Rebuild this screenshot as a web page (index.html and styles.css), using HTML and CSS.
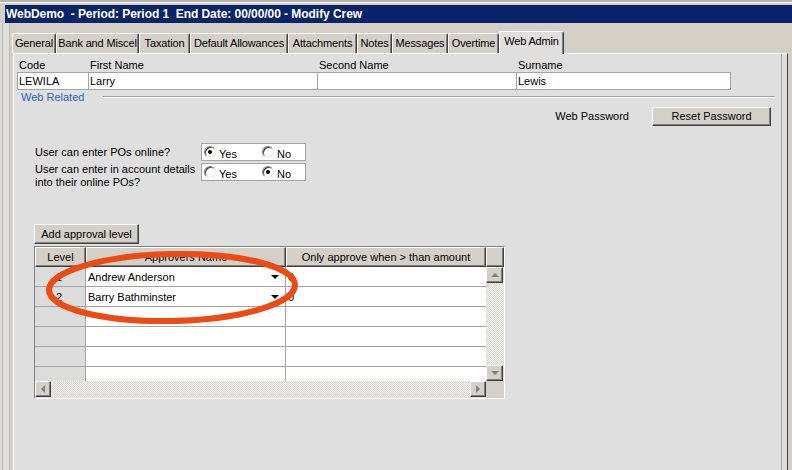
FILE: index.html
```html
<!DOCTYPE html>
<html>
<head>
<meta charset="utf-8">
<link rel="stylesheet" href="styles.css">
</head>
<body>
<div class="screen">
  <div class="topedge"></div>
  <div class="titlebar">WebDemo  - Period: Period 1  End Date: 00/00/00 - Modify Crew</div>
  <div class="client">
    <div class="tabs">
      <div class="tab t1">General</div>
      <div class="tab t2">Bank and Miscel</div>
      <div class="tab t3">Taxation</div>
      <div class="tab t4">Default Allowances</div>
      <div class="tab t5">Attachments</div>
      <div class="tab t6">Notes</div>
      <div class="tab t7">Messages</div>
      <div class="tab t8">Overtime</div>
      <div class="tab t9 active">Web Admin</div>
    </div>
    <div class="panel">
      <div class="content">
        <div class="crew">
          <div class="col c-code"><div class="lbl">Code</div><div class="field">LEWILA</div></div>
          <div class="col c-first"><div class="lbl">First Name</div><div class="field">Larry</div></div>
          <div class="col c-second"><div class="lbl">Second Name</div><div class="field"></div></div>
          <div class="col c-sur"><div class="lbl">Surname</div><div class="field">Lewis</div></div>
        </div>
        <div class="section"><span class="sec-title">Web Related</span><span class="sec-line"></span></div>
        <div class="pw-row"><span class="pw-label">Web Password</span><div class="btn pw-btn">Reset Password</div></div>
        <div class="opt opt1">
          <div class="opt-label">User can enter POs online?</div>
          <div class="rg">
            <div class="ropt yes"><span class="radio checked"></span><span class="rtext">Yes</span></div>
            <div class="ropt"><span class="radio"></span><span class="rtext">No</span></div>
          </div>
        </div>
        <div class="opt opt2">
          <div class="opt-label">User can enter in account details<br>into their online POs?</div>
          <div class="rg">
            <div class="ropt yes"><span class="radio"></span><span class="rtext">Yes</span></div>
            <div class="ropt"><span class="radio checked"></span><span class="rtext">No</span></div>
          </div>
        </div>
        <div class="btn add-btn">Add approval level</div>
        <div class="dgrid">
          <div class="dg-head">
            <div class="hc w-level">Level</div>
            <div class="hc w-name">Approvers Name</div>
            <div class="hc w-amt">Only approve when &gt; than amount</div>
            <div class="hc w-corner"></div>
          </div>
          <div class="dg-body">
            <div class="rows">
              <div class="row"><div class="cell lvl w-level">1</div><div class="cell name w-name"><span>Andrew Anderson</span><span class="dd"></span></div><div class="cell amt w-amt">0</div></div>
              <div class="row"><div class="cell lvl w-level">2</div><div class="cell name w-name"><span>Barry Bathminster</span><span class="dd"></span></div><div class="cell amt w-amt">0</div></div>
              <div class="row"><div class="cell lvl w-level"></div><div class="cell name w-name"></div><div class="cell amt w-amt"></div></div>
              <div class="row"><div class="cell lvl w-level"></div><div class="cell name w-name"></div><div class="cell amt w-amt"></div></div>
              <div class="row"><div class="cell lvl w-level"></div><div class="cell name w-name"></div><div class="cell amt w-amt"></div></div>
              <div class="row"><div class="cell lvl w-level"></div><div class="cell name w-name"></div><div class="cell amt w-amt"></div></div>
            </div>
            <div class="vscroll">
              <div class="sbtn"><span class="arr up"></span></div>
              <div class="track"></div>
              <div class="sbtn"><span class="arr down"></span></div>
            </div>
          </div>
          <div class="hscroll">
            <div class="sbtn h"><span class="arr left"></span></div>
            <div class="track"></div>
            <div class="sbtn h"><span class="arr right"></span></div>
            <div class="corner"></div>
          </div>
        </div>
      </div>
    </div>
  </div>
  <svg class="highlight" width="270" height="90" viewBox="0 0 270 90">
    <ellipse cx="132" cy="41.5" rx="123" ry="33.5" transform="rotate(-1.2 132 41.5)" fill="none" stroke="#ee4a14" stroke-width="6"/>
  </svg>
</div>
</body>
</html>
```

FILE: styles.css
```css
* { box-sizing: border-box; }
html, body { margin: 0; padding: 0; }
body {
  width: 792px;
  height: 470px;
  overflow: hidden;
  background: #d4d0c8;
  font-family: "Liberation Sans", Arial, sans-serif;
  font-size: 11px;
  color: #000;
}
.screen {
  position: relative;
  width: 792px;
  height: 470px;
  display: flex;
  flex-direction: column;
}
.topedge {
  height: 5px;
  flex: none;
  background: linear-gradient(#b9b5ad 0 2px, #ffffff 2px 3px, #d4d0c8 3px);
}
.titlebar {
  flex: none;
  height: 18px;
  margin-left: 5px;
  background: #0a246a;
  color: #fff;
  font-weight: bold;
  font-size: 12px;
  line-height: 18px;
  padding-left: 1px;
  white-space: pre;
  letter-spacing: -0.05px;
}
.client {
  flex: 1;
  display: flex;
  flex-direction: column;
  min-height: 0;
  background: linear-gradient(to right, #dedcd8 0 2px, #b8b4ac 2px 3px, #e2e0dc 3px 9px, #bcb8b0 9px 10px, #d4d0c8 10px);
}
.tabs {
  flex: none;
  height: 30px;
  display: flex;
  align-items: flex-end;
  position: relative;
  z-index: 2;
  background: #d4d0c8;
  margin-left: 11px;
  padding-left: 1px;
}
.tab {
  height: 20px;
  line-height: 18px;
  text-align: center;
  white-space: nowrap;
  letter-spacing: -0.15px;
  background: #d4d0c8;
  border-top: 1px solid #fff;
  border-left: 1px solid #fff;
  border-right: 1px solid #404040;
  box-shadow: inset -1px 0 #808080;
  border-radius: 2px 2px 0 0;
}
.t1 { width: 44px; }
.t2 { width: 83px; }
.t3 { width: 51px; }
.t4 { width: 98px; }
.t5 { width: 69px; }
.t6 { width: 35px; }
.t7 { width: 56px; }
.t8 { width: 51px; }
.t9 { width: 65px; }
.tab.active {
  height: 23px;
  margin-bottom: -1px;
  line-height: 19px;
  background: #e0dfde;
  position: relative;
  z-index: 3;
}
.panel {
  flex: 1;
  margin-left: 13px;
  width: 775px;
  background: #dfdfdf;
  border-top: 1px solid #fff;
  border-left: 1px solid #fff;
  border-right: 1px solid #404040;
  position: relative;
  z-index: 1;
}
.content {
  height: 100%;
  margin-right: 5px;
  border-right: 1px solid #a8a8a8;
  padding: 5px 0 0 3px;
}
.crew { display: flex; }
.col { display: flex; flex-direction: column; }
.col + .col { margin-left: -1px; }
.lbl { height: 13px; line-height: 13px; padding-left: 2px; }
.field {
  height: 18px;
  line-height: 16px;
  border: 1px solid #a4a4a4;
  background: #fff;
  padding-left: 1px;
}
.c-code { width: 72px; }
.c-first { width: 230px; }
.c-second { width: 200px; }
.c-sur { width: 215px; }
.section {
  display: flex;
  align-items: center;
  height: 14px;
  padding-left: 4px;
  margin-right: 6px;
}
.sec-title { color: #2a62c6; }
.sec-line {
  flex: 1;
  height: 2px;
  margin-left: 19px;
  border-top: 1px solid #a8a8a8;
  border-bottom: 1px solid #fff;
}
.pw-row {
  display: flex;
  justify-content: flex-end;
  align-items: center;
  height: 19px;
  margin-top: 3px;
  padding-right: 10px;
}
.pw-label { margin-right: 23px; padding-bottom: 1px; }
.btn {
  background: #d4d0c8;
  border: 1px solid;
  border-color: #fff #404040 #404040 #fff;
  box-shadow: inset -1px -1px #808080;
  text-align: center;
  white-space: nowrap;
}
.pw-btn { width: 119px; height: 19px; line-height: 17px; }
.opt { display: flex; padding-left: 18px; }
.opt1 { align-items: center; margin-top: 17px; margin-bottom: 2px; }
.opt2 { align-items: flex-start; }
.opt-label { width: 166px; line-height: 13px; }
.rg {
  display: flex;
  align-items: center;
  width: 105px;
  height: 18px;
  border: 1px solid #a4a4a4;
  background: #fff;
  padding-left: 2px;
}
.ropt { display: flex; align-items: center; }
.ropt.yes { width: 58px; }
.radio {
  width: 12px;
  height: 12px;
  border-radius: 50%;
  border: 1px solid;
  border-color: #808080 #e8e8e8 #e8e8e8 #808080;
  box-shadow: inset 1px 1px 0 #404040;
  background: #fff;
  position: relative;
  flex: none;
}
.radio.checked::after {
  content: "";
  position: absolute;
  left: 3px;
  top: 3px;
  width: 4px;
  height: 4px;
  border-radius: 50%;
  background: #000;
}
.rtext { margin-left: 3px; padding-top: 4px; line-height: 13px; }
.add-btn {
  width: 105px;
  height: 20px;
  line-height: 18px;
  margin-left: 17px;
  margin-top: 35px;
}
.dgrid {
  width: 471px;
  margin-left: 17px;
  margin-top: 2px;
  border: 1px solid;
  border-color: #808080 #fff #fff #808080;
  display: flex;
  flex-direction: column;
}
.dg-head { display: flex; height: 20px; }
.hc {
  height: 20px;
  line-height: 18px;
  text-align: center;
  white-space: nowrap;
  overflow: hidden;
  background: #d4d0c8;
  border: 1px solid;
  border-color: #fff #404040 #404040 #fff;
  box-shadow: inset -1px -1px #808080;
}
.w-level { width: 51px; flex: none; }
.w-name { width: 200px; flex: none; }
.w-amt { width: 200px; flex: none; }
.w-corner { width: 18px; flex: none; }
.dg-body { display: flex; height: 114px; }
.rows { width: 451px; overflow: hidden; background: #fff; }
.row { display: flex; height: 20px; }
.cell {
  height: 20px;
  line-height: 20px;
  border-right: 1px solid #a4a4a4;
  border-bottom: 1px solid #a4a4a4;
  padding-left: 2px;
}
.cell.lvl { background: #dcdcdc; padding-left: 21px; }
.cell.name { display: flex; justify-content: space-between; align-items: center; padding-right: 6px; }
.cell.amt { border-right: none; }
.dd {
  width: 0;
  height: 0;
  border-left: 4px solid transparent;
  border-right: 4px solid transparent;
  border-top: 4px solid #000;
}
.vscroll { width: 18px; display: flex; flex-direction: column; }
.track {
  flex: 1;
  background: repeating-conic-gradient(#ffffff 0 25%, #d4d0c8 0 50%) 0 0 / 2px 2px;
}
.sbtn {
  width: 17px;
  height: 16px;
  flex: none;
  background: #d4d0c8;
  border: 1px solid;
  border-color: #fff #404040 #404040 #fff;
  box-shadow: inset -1px -1px #808080;
  display: flex;
  align-items: center;
  justify-content: center;
}
.sbtn.h { width: 16px; height: 16px; }
.arr { width: 0; height: 0; }
.arr.up { border-left: 4px solid transparent; border-right: 4px solid transparent; border-bottom: 4px solid #808080; }
.arr.down { border-left: 4px solid transparent; border-right: 4px solid transparent; border-top: 4px solid #808080; }
.arr.left { border-top: 4px solid transparent; border-bottom: 4px solid transparent; border-right: 4px solid #808080; }
.arr.right { border-top: 4px solid transparent; border-bottom: 4px solid transparent; border-left: 4px solid #808080; }
.hscroll { display: flex; height: 17px; }
.hscroll .track { height: 16px; }
.corner { width: 18px; background: #d4d0c8; }
.highlight {
  position: absolute;
  left: 40px;
  top: 246px;
  z-index: 5;
}
```
